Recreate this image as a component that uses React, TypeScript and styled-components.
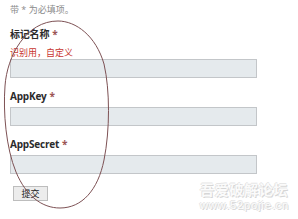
import React from "react";
import styled, { createGlobalStyle } from "styled-components";

const Global = createGlobalStyle`
  html, body { margin: 0; padding: 0; background: #fff; }
  body { width: 298px; height: 219px; overflow: hidden; }
`;

const Page = styled.div`
  position: relative;
  width: 298px;
  height: 219px;
  overflow: hidden;
  background: #fff;
  font-family: "Open Sans", "Noto Sans CJK SC", sans-serif;
`;

const Form = styled.form`
  display: flex;
  flex-direction: column;
  align-items: flex-start;
  padding: 3px 0 0 10px;
`;

const Note = styled.div`
  font-size: 9px;
  line-height: 13px;
  color: #8a8a8a;
`;

const Label = styled.label`
  display: block;
  margin-top: 12px;
  font-size: 10px;
  line-height: 13px;
  font-weight: 700;
  color: #2b2b2b;
  letter-spacing: -0.2px;
`;

const Star = styled.span`
  color: #9c5555;
  font-weight: 700;
  margin-left: 3px;
`;

const Hint = styled.div`
  margin-top: 5px;
  font-size: 9px;
  line-height: 13px;
  color: #c8362f;
`;

const Input = styled.input<{ $gap: number }>`
  box-sizing: border-box;
  margin: ${(p) => p.$gap}px 0 0 0;
  width: 247px;
  height: 19px;
  border: 1px solid #c3c6c9;
  background: #e5eaed;
  padding: 0 4px;
  outline: none;
`;

const Submit = styled.button`
  box-sizing: border-box;
  margin: 12px 0 0 3px;
  width: 35px;
  height: 15px;
  padding: 0;
  border: 1px solid #bdbdbd;
  background: #ececec;
  font-family: "Noto Sans CJK SC", sans-serif;
  font-size: 9px;
  line-height: 13px;
  color: #222;
`;

const Watermark = styled.div`
  position: absolute;
  left: 200px;
  top: 179px;
  display: flex;
  flex-direction: column;
  align-items: flex-start;
  color: #fbfbfb;
  text-shadow: 1px 1px 0 #d6d6d6, -1px 0 0 #e4e4e4, 0 -1px 0 #e6e6e6;
  pointer-events: none;
`;

const WmTitle = styled.div`
  font-family: "Noto Sans CJK SC", sans-serif;
  font-weight: 700;
  font-size: 14px;
  line-height: 20px;
  letter-spacing: 0.7px;
`;

const WmUrl = styled.div`
  font-family: "Liberation Sans", sans-serif;
  font-size: 11px;
  line-height: 13px;
  letter-spacing: 0.9px;
`;

const Scribble = styled.svg`
  position: absolute;
  left: 0;
  top: 0;
  pointer-events: none;
`;

export default function App() {
  return (
    <Page>
      <Global />
      <Form onSubmit={(e) => e.preventDefault()}>
        <Note>带 * 为必填项。</Note>
        <Label>
          标记名称<Star>*</Star>
        </Label>
        <Hint>识别用，自定义</Hint>
        <Input $gap={0} />
        <Label>
          AppKey<Star>*</Star>
        </Label>
        <Input $gap={4} />
        <Label>
          AppSecret<Star>*</Star>
        </Label>
        <Input $gap={4} />
        <Submit type="submit">提交</Submit>
      </Form>
      <Watermark>
        <WmTitle>吾爱破解论坛</WmTitle>
        <WmUrl>www.52pojie.cn</WmUrl>
      </Watermark>
      <Scribble width="298" height="219" viewBox="0 0 298 219">
        <path
          d="M58,21 C76,21 96,36 104,64 C110,90 110,130 104,160 C98,190 82,208 60,208 C42,208 26,196 16,172 C6,148 3,112 5,86 C7,56 26,21 58,21 Z"
          fill="none"
          stroke="#7d5154"
          strokeWidth="1"
        />
      </Scribble>
    </Page>
  );
}
